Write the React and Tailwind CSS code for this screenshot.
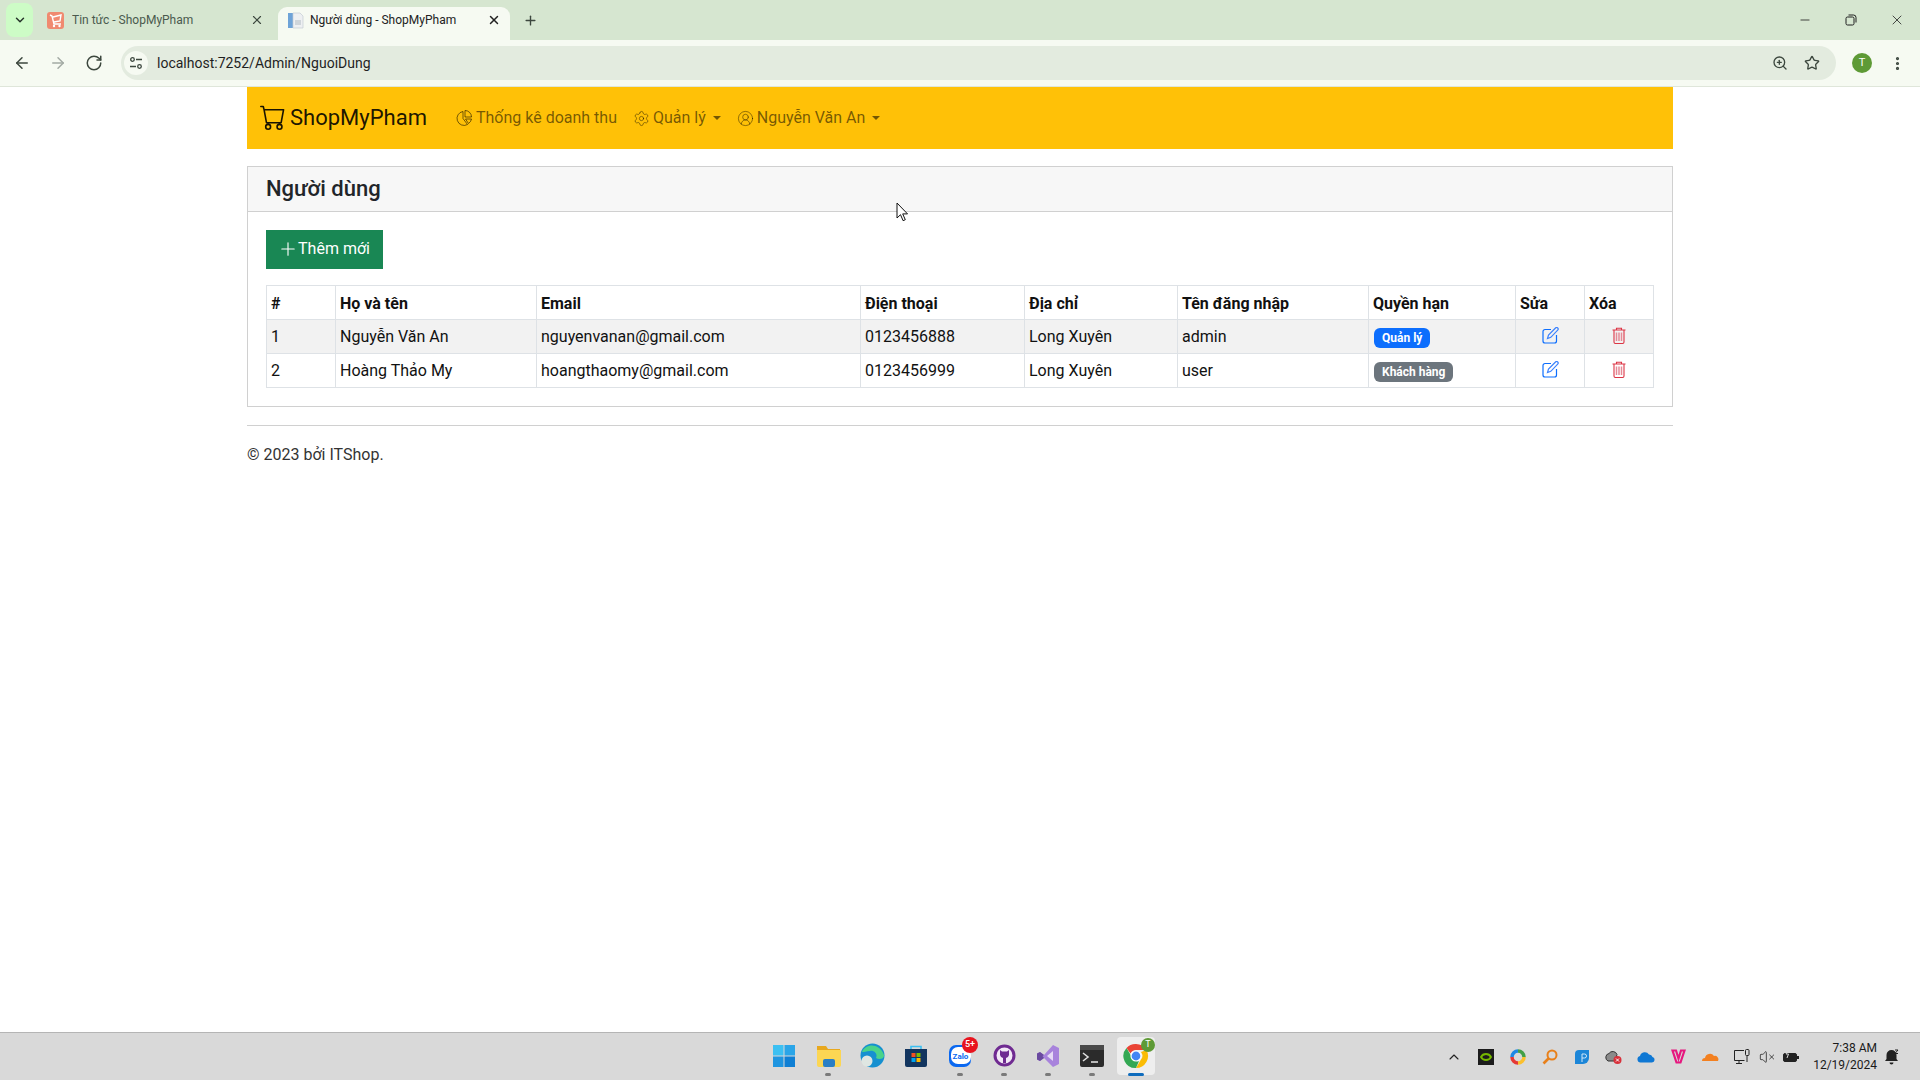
import React from "react";
import { ChevronDown, X, Plus, ArrowLeft, ArrowRight, RotateCw, ZoomIn, Star, MoreVertical, Minus, ChevronUp, VolumeX, Settings, CircleUserRound } from "lucide-react";
import { BsCart, BsPlusLg } from "react-icons/bs";

const users = [
  { id: 1, name: "Nguyễn Văn An", email: "nguyenvanan@gmail.com", phone: "0123456888", city: "Long Xuyên", login: "admin", role: "Quản lý", admin: true },
  { id: 2, name: "Hoàng Thảo My", email: "hoangthaomy@gmail.com", phone: "0123456999", city: "Long Xuyên", login: "user", role: "Khách hàng", admin: false },
];

function Caret() {
  return <span className="ml-[7px] inline-block w-0 h-0 border-x-[4.8px] border-x-transparent border-t-[4.8px] border-t-current" />;
}

function TabCartIcon() {
  return (
    <svg width="17" height="17" viewBox="0 0 17 17" className="shrink-0">
      <rect width="17" height="17" rx="3" fill="#f08a70" />
      <path d="M3 3l2 1 2 8h7M6 5l8-2-1 6-6 1" fill="none" stroke="#fff" strokeWidth="1.4" />
      <circle cx="7" cy="14" r="1.2" fill="#fff" />
      <circle cx="12.5" cy="14" r="1.2" fill="#fff" />
    </svg>
  );
}

function TabDocIcon() {
  return (
    <svg width="17" height="17" viewBox="0 0 17 17" className="shrink-0">
      <rect x="1" y="1" width="6" height="15" fill="#6ea3d8" />
      <path d="M6 1h7l3 3v12H6z" fill="#eef0f2" stroke="#c4ccd4" strokeWidth="0.7" />
      <path d="M8 8h6v5H8z" fill="#cfd5da" />
    </svg>
  );
}

function PieIcon() {
  return (
    <svg width="18" height="18" viewBox="0 0 18 18" fill="none" stroke="currentColor" strokeWidth="1" className="mr-[3px] ml-[2px]">
      <path d="M8 2.500a7 7 0 1 0 4.500 13L8 9.500z" />
      <path d="M10 1.500a6.500 6.500 0 0 1 6.500 6.500H10z" />
      <path d="M10.500 10h6a7 7 0 0 1-3 4.500z" />
    </svg>
  );
}

function EditIcon() {
  return (
    <svg width="17" height="17" viewBox="0 0 17 17" fill="none" stroke="#0d6efd" strokeWidth="1.2" className="mx-auto relative top-[-1px]">
      <path d="M9 2.500H3a2 2 0 0 0-2 2V14a2 2 0 0 0 2 2h9.500a2 2 0 0 0 2-2V8" />
      <path d="M5.500 11.500l1-3.500L13.500 1a1.300 1.300 0 0 1 2.200 2.200L8.800 10.300z" stroke="#3b82fd" />
    </svg>
  );
}

function TrashIcon() {
  return (
    <svg width="14" height="17" viewBox="0 0 14 17" fill="none" stroke="#dc3545" strokeWidth="1.1" className="mx-auto relative top-[-1px]">
      <path d="M0.500 3h13M4.500 3V1.200h5V3M2 3v12a1.500 1.500 0 0 0 1.500 1.500h7A1.500 1.500 0 0 0 12 15V3" />
      <path d="M4.500 5.500v8.500M7 5.500v8.500M9.500 5.500v8.500" stroke="#e58a96" strokeWidth="1.500" />
    </svg>
  );
}

function BrowserChrome() {
  return (
    <div className="shrink-0">
      <div className="h-10 bg-[#d6e6d0] flex items-end pl-[6px]">
        <div className="w-[27px] h-[34px] mb-[-1px] self-start mt-[3px] rounded-lg bg-[#cdfcc6] flex items-center justify-center">
          <ChevronDown size={14} strokeWidth={2.5} className="text-[#26332a]" />
        </div>
        <div className="w-[245px] h-[33px] flex items-center pl-[14px] pr-[14px] pb-[7px] gap-[8px] text-[12px] text-[#4a5a4e]">
          <TabCartIcon />
          <span className="flex-1 truncate">Tin tức - ShopMyPham</span>
          <X size={14} strokeWidth={2} className="text-[#3c473e]" />
        </div>
        <div className="w-[232px] h-[33px] rounded-t-[9px] bg-[#f6faf2] flex items-center pl-[9px] pr-[9px] pb-[7px] gap-[6px] text-[12px] text-[#222]">
          <TabDocIcon />
          <span className="flex-1 truncate">Người dùng - ShopMyPham</span>
          <X size={14} strokeWidth={2.5} className="text-[#222]" />
        </div>
        <div className="h-[33px] pl-[13px] pb-[7px] flex items-center">
          <Plus size={15} strokeWidth={2.2} className="text-[#3c473e]" />
        </div>
        <div className="flex-1 self-stretch flex items-center justify-end text-[#1f1f1f]">
          <div className="w-[46px] flex justify-center"><Minus size={14} strokeWidth={1.4} /></div>
          <div className="w-[46px] flex justify-center">
            <svg width="12" height="12" viewBox="0 0 12 12" fill="none" stroke="currentColor" strokeWidth="1">
              <rect x="1" y="3" width="8" height="8" rx="1.5" />
              <path d="M3.5 1h5a2.5 2.5 0 0 1 2.5 2.5v5" />
            </svg>
          </div>
          <div className="w-[46px] flex justify-center"><X size={16} strokeWidth={1.2} /></div>
        </div>
      </div>
      <div className="h-[47px] bg-[#f6faf2] border-b border-[#dfe6da] flex items-center">
        <div className="w-[121px] flex items-center pl-[13px] gap-[18px] text-[#3c473e]">
          <ArrowLeft size={18} strokeWidth={2} />
          <ArrowRight size={18} strokeWidth={2} className="text-[#a3aaa4]" />
          <RotateCw size={18} strokeWidth={2} />
        </div>
        <div className="w-[1715px] h-[34px] rounded-full bg-[#e3ebdf] flex items-center pl-[3px] pr-[16px] text-[14px] text-[#1f1f1f]">
          <div className="w-[24px] h-[24px] rounded-full bg-[#f6faf2] flex items-center justify-center mr-[9px]">
            <svg width="14" height="14" viewBox="0 0 14 14" fill="none" stroke="#3c473e" strokeWidth="1.3">
              <circle cx="3.5" cy="3.5" r="1.8" />
              <path d="M7 3.5h6M1 10.5h6" />
              <circle cx="10.5" cy="10.5" r="1.8" />
            </svg>
          </div>
          <span className="flex-1">localhost:7252/Admin/NguoiDung</span>
          <ZoomIn size={16} strokeWidth={2} className="text-[#3c473e] mr-[16px]" />
          <Star size={16} strokeWidth={2} className="text-[#3c473e]" />
        </div>
        <div className="flex-1 flex items-center pl-[16px] gap-[17px]">
          <div className="w-5 h-5 rounded-full bg-[#5e9a36] text-white text-[11px] flex items-center justify-center">T</div>
          <MoreVertical size={17} strokeWidth={2.5} className="text-[#3c473e]" />
        </div>
      </div>
    </div>
  );
}

function Navbar() {
  return (
    <nav className="h-[62px] bg-[#ffc107] flex items-center pl-[12px]">
      <a className="flex items-center text-black/90 mr-[18px] pb-[2px]">
        <BsCart size={26} className="mr-[4px] ml-[1px]" />
        <span className="text-[22px]">ShopMyPham</span>
      </a>
      <div className="flex items-center text-black/55 text-[16px]">
        <a className="flex items-center px-[8px]"><PieIcon />Thống kê doanh thu</a>
        <a className="flex items-center px-[8px]"><Settings size={17} strokeWidth={1.1} className="mr-[3px]" />Quản lý<Caret /></a>
        <a className="flex items-center px-[8px]"><CircleUserRound size={17} strokeWidth={1.1} className="mr-[3px]" />Nguyễn Văn An<Caret /></a>
      </div>
    </nav>
  );
}

function UserTable() {
  const cell = "border border-[#dee2e6] px-[4px] py-[4px] text-left align-middle";
  const head = "border border-[#dee2e6] px-[4px] pt-[5px] pb-[3px] text-left align-middle font-bold";
  return (
    <table className="w-full table-fixed border-collapse text-[16px] leading-6 text-[#111]">
      <thead>
        <tr className="h-[34px]">
          <th className={`${head} w-[69px]`}>#</th>
          <th className={`${head} w-[201px]`}>Họ và tên</th>
          <th className={`${head} w-[324px]`}>Email</th>
          <th className={`${head} w-[164px]`}>Điện thoại</th>
          <th className={`${head} w-[153px]`}>Địa chỉ</th>
          <th className={`${head} w-[191px]`}>Tên đăng nhập</th>
          <th className={`${head} w-[147px]`}>Quyền hạn</th>
          <th className={`${head} w-[69px]`}>Sửa</th>
          <th className={head}>Xóa</th>
        </tr>
      </thead>
      <tbody>
        {users.map((u) => (
          <tr key={u.id} className={u.id % 2 === 1 ? "h-[34px] bg-[#f2f2f2]" : "h-[34px]"}>
            <td className={cell}>{u.id}</td>
            <td className={cell}>{u.name}</td>
            <td className={cell}>{u.email}</td>
            <td className={cell}>{u.phone}</td>
            <td className={cell}>{u.city}</td>
            <td className={cell}>{u.login}</td>
            <td className={cell}>
              <span className={`inline-block align-middle ml-[1px] mt-[1px] rounded-[6px] px-[8px] py-[4px] text-[12px] leading-3 font-bold text-white ${u.admin ? "bg-[#0d6efd]" : "bg-[#6c757d]"}`}>{u.role}</span>
            </td>
            <td className={cell}><EditIcon /></td>
            <td className={cell}><TrashIcon /></td>
          </tr>
        ))}
      </tbody>
    </table>
  );
}

function PageContent() {
  return (
    <div className="relative flex-1 w-[1426px] ml-[247px] text-[#212529]">
      <Navbar />
      <div className="mt-[17px] border border-[#d0d0d0]">
        <div className="h-[45px] pb-[2px] bg-[#f7f7f7] border-b border-[#d0d0d0] flex items-center px-[18px]">
          <h5 className="text-[22px] font-medium">Người dùng</h5>
        </div>
        <div className="pt-[18px] px-[18px] pb-[18px]">
          <button className="h-[39px] w-[117px] pb-[2px] bg-[#198754] text-white text-[16px] flex items-center justify-center">
            <BsPlusLg size={18} className="mr-[1px]" />Thêm mới
          </button>
          <div className="mt-[16px]"><UserTable /></div>
        </div>
      </div>
      <hr className="mt-[18px] border-t border-[#d0d0d0]" />
      <p className="mt-[17px] text-[16px] leading-6 text-[#333]">© 2023 bởi ITShop.</p>
      <svg width="13" height="20" viewBox="0 0 13 20" className="absolute left-[649px] top-[115px]">
        <path d="M1 1v15l3.5-3.3 2.6 6 2.2-1-2.6-5.8H11.5z" fill="#fff" stroke="#111" strokeWidth="1" />
      </svg>
    </div>
  );
}

function TaskItem({ children, active, dot }) {
  return (
    <div className="relative w-[44px] h-[42px] flex items-center justify-center">
      {active && <span className="absolute w-[38px] h-[38px] top-[2px] rounded-[4px] bg-[#eeeeee]" />}
      <div className="relative flex items-center justify-center">{children}</div>
      {dot && <span className={`absolute bottom-[1px] h-[3px] rounded-full ${active ? "w-[16px] bg-[#0f6cbd]" : "w-[6px] bg-[#7a7a7a]"}`} />}
    </div>
  );
}

function TaskbarApps() {
  return (
    <div className="flex items-center pb-[2px]">
      <TaskItem>
        <svg width="24" height="24" viewBox="0 0 24 24">
          <rect x="1" y="1" width="10.5" height="10.5" fill="#3cc0f2" />
          <rect x="12.5" y="1" width="10.5" height="10.5" fill="#2aa5e8" />
          <rect x="1" y="12.5" width="10.5" height="10.5" fill="#1f95e0" />
          <rect x="12.5" y="12.5" width="10.5" height="10.5" fill="#0f7fd4" />
        </svg>
      </TaskItem>
      <TaskItem dot>
        <svg width="25" height="24" viewBox="0 0 25 24">
          <path d="M1 2h9l2 3h12v5H1z" fill="#e8a81e" />
          <path d="M1 6h24v15a2 2 0 0 1-2 2H3a2 2 0 0 1-2-2z" fill="#fcd653" />
          <rect x="7" y="15" width="12" height="8" rx="2" fill="#2a7fc4" />
        </svg>
      </TaskItem>
      <TaskItem>
        <svg width="25" height="25" viewBox="0 0 25 25">
          <circle cx="12.5" cy="12.5" r="12" fill="#1690d0" />
          <path d="M2 9C5 1 19-1 24 12c.5 4-5 5-8 3 2-4-2-8-6-7-4 .5-6 1-8 1z" fill="#4ad38a" />
          <circle cx="7" cy="18" r="5.5" fill="#dfe6e2" />
        </svg>
      </TaskItem>
      <TaskItem>
        <svg width="24" height="24" viewBox="0 0 24 24">
          <path d="M7 5V2.5h10V5" fill="none" stroke="#3cc0f2" strokeWidth="1.6" />
          <path d="M1 5h22v16a2 2 0 0 1-2 2H3a2 2 0 0 1-2-2z" fill="#12355f" />
          <rect x="7.5" y="9" width="4" height="4" fill="#f25022" />
          <rect x="12.5" y="9" width="4" height="4" fill="#7fba00" />
          <rect x="7.5" y="14" width="4" height="4" fill="#00a4ef" />
          <rect x="12.5" y="14" width="4" height="4" fill="#ffb900" />
        </svg>
      </TaskItem>
      <TaskItem dot>
        <svg width="24" height="24" viewBox="0 0 24 24">
          <rect x="1" y="1" width="22" height="22" rx="7" fill="#0a68f0" />
          <rect x="3" y="3" width="20" height="17" rx="7" fill="#fff" />
          <text x="12.5" y="15" textAnchor="middle" fontSize="8" fontWeight="700" fill="#0a68f0" fontFamily="Roboto">Zalo</text>
        </svg>
        <span className="absolute top-[-7px] right-[-6px] w-4 h-4 rounded-full bg-[#e8141e] text-white text-[9px] font-medium flex items-center justify-center">5+</span>
      </TaskItem>
      <TaskItem dot>
        <svg width="23" height="23" viewBox="0 0 23 23">
          <circle cx="11.5" cy="11.5" r="9.5" fill="#f2e8f6" stroke="#6f2a91" strokeWidth="3" />
          <path d="M7 6l2 1.5h5L16 6v5a4 4 0 0 1-3 3v5h-3v-5a4 4 0 0 1-3-3z" fill="#6f2a91" />
        </svg>
      </TaskItem>
      <TaskItem dot>
        <svg width="24" height="24" viewBox="0 0 24 24">
          <path d="M17 1l6 3v16l-6 3-9-9-4 3-3-1.500V9.500L4 8l4 3z" fill="#a883dc" />
          <path d="M17 7v10l-6-5z" fill="#e6daf5" />
          <path d="M1 9.500L4 8l4 3-1.500 1L8 14l-4 3-3-1.500z" fill="#6a4aa0" />
        </svg>
      </TaskItem>
      <TaskItem dot>
        <svg width="24" height="22" viewBox="0 0 24 22">
          <rect width="24" height="22" rx="2" fill="#2b2b2b" />
          <rect width="24" height="5" fill="#4a4a4a" />
          <path d="M3 8l5 4-5 4" fill="none" stroke="#ddd" strokeWidth="1.6" />
          <path d="M11 17h7" stroke="#ddd" strokeWidth="1.6" />
        </svg>
      </TaskItem>
      <TaskItem active dot>
        <svg width="26" height="26" viewBox="0 0 26 26">
          <path d="M13 1a12 12 0 0 1 10.400 6H13a6 6 0 0 0-5.500 3.500L3.500 5A12 12 0 0 1 13 1z" fill="#ea4335" />
          <path d="M23.400 7A12 12 0 0 1 13 25l5-8.500A6 6 0 0 0 18 9z" fill="#fbbc04" />
          <path d="M13 25A12 12 0 0 1 3.500 5l5 8.500A6 6 0 0 0 16 18z" fill="#34a853" />
          <circle cx="13" cy="13" r="5" fill="#4285f4" stroke="#fff" strokeWidth="1.2" />
        </svg>
        <span className="absolute top-[-5px] right-[-6px] w-[14px] h-[14px] rounded-full bg-[#5e9a36] text-white text-[9px] flex items-center justify-center">T</span>
      </TaskItem>
    </div>
  );
}

function TrayIcon({ children }) {
  return <div className="w-[32px] flex items-center justify-center">{children}</div>;
}

function Tray() {
  return (
    <div className="flex items-center justify-end pr-[21px]">
      <TrayIcon><ChevronUp size={16} strokeWidth={1.6} className="text-[#222]" /></TrayIcon>
      <TrayIcon>
        <svg width="16" height="16" viewBox="0 0 16 16">
          <rect width="16" height="16" fill="#1c1c1c" />
          <path d="M3 8c2-4 8-4 10 0-2 4-8 4-10 0z" fill="none" stroke="#76b900" strokeWidth="1.800" />
        </svg>
      </TrayIcon>
      <TrayIcon>
        <svg width="16" height="16" viewBox="0 0 16 16" fill="none" strokeWidth="3.500">
          <path d="M8 2a6 6 0 0 1 6 6" stroke="#43a047" />
          <path d="M14 8a6 6 0 0 1-6 6" stroke="#fbc02d" />
          <path d="M8 14a6 6 0 0 1-6-6" stroke="#e53935" />
          <path d="M2 8a6 6 0 0 1 6-6" stroke="#1e88e5" />
        </svg>
      </TrayIcon>
      <TrayIcon>
        <svg width="16" height="16" viewBox="0 0 16 16" fill="none" stroke="#e8801a" strokeWidth="2">
          <circle cx="10" cy="6" r="4.500" />
          <path d="M6.500 9.500L1.500 14.500" strokeWidth="2.600" />
        </svg>
      </TrayIcon>
      <TrayIcon>
        <svg width="16" height="16" viewBox="0 0 16 16">
          <path d="M5 1h10v8a6 6 0 0 1-6 6H1V5a4 4 0 0 1 4-4z" fill="#1c86d8" />
          <path d="M8 5v8M8 5h2.500a2 2 0 0 1 0 4H8" fill="none" stroke="#cfe6f7" strokeWidth="1" />
        </svg>
      </TrayIcon>
      <TrayIcon>
        <svg width="18" height="16" viewBox="0 0 18 16">
          <path d="M3 12a4 4 0 0 1 1-7.500 4.500 4.500 0 0 1 8 1L10 12z" fill="#8a8a8a" stroke="#333" strokeWidth="1" />
          <circle cx="12.500" cy="11" r="4" fill="#d8303a" />
          <path d="M11 9.500l3 3m0-3l-3 3" stroke="#fff" strokeWidth="1" />
        </svg>
      </TrayIcon>
      <TrayIcon>
        <svg width="18" height="12" viewBox="0 0 18 12">
          <path d="M3.500 11.500a3.300 3.300 0 0 1-.5-6.500 5 5 0 0 1 9-1.500 3.500 3.500 0 0 1 3.500 2.500 2.800 2.800 0 0 1-.5 5.500z" fill="#0f78d4" />
        </svg>
      </TrayIcon>
      <TrayIcon>
        <svg width="15" height="15" viewBox="0 0 15 15" fill="none" stroke="#e6187f" strokeWidth="2.200">
          <path d="M1.500 1.500h3.500l2.500 8 2.500-8h3.500L9.500 13.500h-4z" />
        </svg>
      </TrayIcon>
      <TrayIcon>
        <svg width="18" height="10" viewBox="0 0 18 10">
          <path d="M1 9a3 3 0 0 1 3-3 5 5 0 0 1 9-2 3.500 3.500 0 0 1 4 5z" fill="#f38020" />
        </svg>
      </TrayIcon>
      <div className="w-[18px] ml-[7px] flex justify-center">
        <svg width="18" height="16" viewBox="0 0 18 16" fill="none" stroke="#222" strokeWidth="1">
          <path d="M11 1.500H1.500v10h10M6 11.500v3M3 14.500h6" />
          <rect x="12.500" y="0.500" width="3.500" height="6" rx="1" />
          <path d="M14 7v6" />
        </svg>
      </div>
      <div className="w-[32px] flex justify-center"><VolumeX size={16} strokeWidth={1.2} className="text-[#222]" /></div>
      <div className="w-[16px] flex justify-center">
        <svg width="16" height="14" viewBox="0 0 16 14">
          <rect x="0.500" y="3.500" width="13" height="8" rx="1.500" fill="#222" stroke="#222" />
          <rect x="14" y="6" width="2" height="3" fill="#222" />
          <path d="M5 0L3 4h2.500L4 8" fill="none" stroke="#d9d9d9" strokeWidth="1" />
        </svg>
      </div>
      <div className="ml-[14px] flex flex-col items-end text-[12px] leading-[17px] text-[#1a1a1a]">
        <span>7:38 AM</span>
        <span>12/19/2024</span>
      </div>
      <svg width="15" height="16" viewBox="0 0 15 16" className="ml-[7px]">
        <path d="M1 12l1.500-2V6a5 5 0 0 1 10 0v4l1.500 2z" fill="#222" />
        <path d="M5.500 13.500a2 2 0 0 0 4 0z" fill="#222" />
        <path d="M11 1h3l-3 3.500h3" fill="none" stroke="#222" strokeWidth="1" />
      </svg>
    </div>
  );
}

export default function App() {
  return (
    <div className="h-screen flex flex-col bg-white overflow-hidden font-['Roboto',sans-serif]">
      <BrowserChrome />
      <PageContent />
      <footer className="shrink-0 h-[48px] bg-[#d9d9d9] border-t border-[#b5b5b5] grid grid-cols-[1fr_auto_1fr] items-center">
        <div />
        <TaskbarApps />
        <Tray />
      </footer>
    </div>
  );
}
